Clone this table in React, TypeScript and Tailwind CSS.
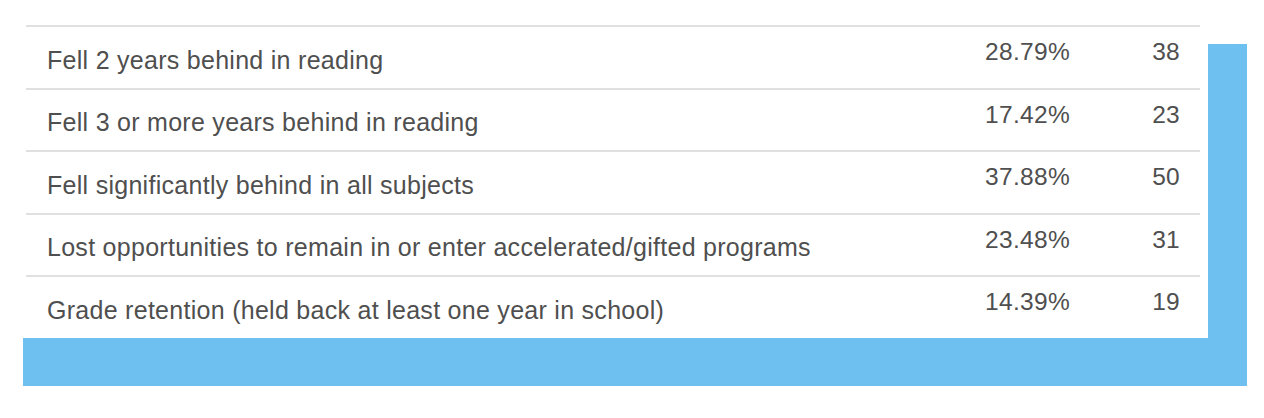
const rows = [
  { label: "Fell 2 years behind in reading", pct: "28.79%", n: 38 },
  { label: "Fell 3 or more years behind in reading", pct: "17.42%", n: 23 },
  { label: "Fell significantly behind in all subjects", pct: "37.88%", n: 50 },
  {
    label: "Lost opportunities to remain in or enter accelerated/gifted programs",
    pct: "23.48%",
    n: 31,
  },
  {
    label: "Grade retention (held back at least one year in school)",
    pct: "14.39%",
    n: 19,
  },
];

export default function App() {
  return (
    <div className="relative h-[418px] w-[1264px] bg-white font-['Liberation_Sans',Arial,sans-serif]">
      <div className="absolute left-[23px] top-[44px] h-[342px] w-[1224px] bg-[#6ec0f0]" />
      <div className="relative ml-[23px] h-[338px] w-[1185px] bg-white pl-[3px] pr-[8px] pt-[25px]">
        {rows.map((r) => (
          <div
            key={r.label}
            className="flex h-[62.5px] border-t-2 border-[#e0e0e0] leading-[25px] text-[#4f4f4f]"
          >
            <div className="flex-1 pl-[21px] pt-[20.5px] text-[25px] tracking-[0.28px]">
              {r.label}
            </div>
            <div className="w-[120px] pt-[12px] text-right text-[24.5px] tracking-[0.3px]">
              {r.pct}
            </div>
            <div className="w-[130px] pr-[20px] pt-[12px] text-right text-[24.5px] tracking-[0.3px]">
              {r.n}
            </div>
          </div>
        ))}
      </div>
    </div>
  );
}
